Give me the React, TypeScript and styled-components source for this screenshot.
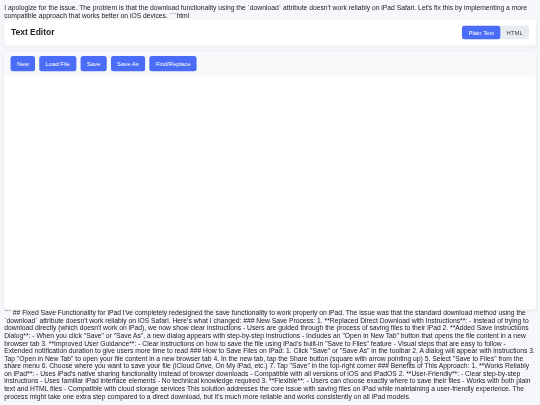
import styled, { createGlobalStyle } from "styled-components";

const GlobalStyle = createGlobalStyle`
  html, body {
    margin: 0;
    padding: 0;
    background: #f5f7fa;
  }

  body {
    font-family: "Liberation Sans", Arial, sans-serif;
    color: #222;
  }
`;

// the shot is a 1280x960 desktop page shrunk to fit 540x405, hence the soft edges
const Viewport = styled.div`
  width: 540px;
  height: 405px;
  overflow: hidden;
  filter: blur(0.3px);
`;

const Page = styled.div`
  display: flex;
  flex-direction: column;
  width: 1280px;
  height: 960px;
  padding: 10px;
  box-sizing: border-box;
  transform: scale(0.421875);
  transform-origin: top left;
`;

const Prose = styled.p`
  margin: 0;
  font-size: 16px;
  color: #1c1c1c;
`;

const Header = styled.header`
  display: flex;
  justify-content: space-between;
  align-items: center;
  padding: 15px 16px;
  margin-bottom: 15px;
  background: #fff;
  border-radius: 8px;
  box-shadow: 0 2px 10px rgba(0, 0, 0, 0.06);
`;

const Title = styled.h1`
  margin: 0;
  font-size: 20px;
  font-weight: 700;
  color: #222;
`;

const Toggle = styled.div`
  display: flex;
  background: #e9ecef;
  border-radius: 6px;
`;

const ToggleOption = styled.button<{ $active?: boolean }>`
  padding: 8px 15px;
  border: 0;
  border-radius: 6px;
  font-family: inherit;
  font-size: 14px;
  color: ${(p) => (p.$active ? "#fff" : "#444")};
  background: ${(p) => (p.$active ? "#4a6cf7" : "transparent")};
`;

const Editor = styled.section`
  display: flex;
  flex-direction: column;
  height: 610px;
  overflow: hidden;
  background: #fff;
  border-radius: 8px;
  box-shadow: 0 2px 10px rgba(0, 0, 0, 0.06);
`;

const Toolbar = styled.div`
  display: flex;
  gap: 10px;
  padding: 10px 15px 9px;
  background: #f8f9fa;
  border-bottom: 1px solid #e9ecef;
`;

const ToolButton = styled.button`
  padding: 10px 15px;
  border: 0;
  border-radius: 6px;
  font-family: inherit;
  font-size: 14px;
  color: #fff;
  background: #4a6cf7;
`;

const EditArea = styled.div`
  flex: 1;
  background: #fff;
`;

const tools = ["New", "Load File", "Save", "Save As", "Find/Replace"];

const intro =
  "I apologize for the issue. The problem is that the download functionality using the `download` attribute doesn't work reliably on iPad Safari. Let's fix this by implementing a more compatible approach that works better on iOS devices. ```html";

const outro =
  "``` ## Fixed Save Functionality for iPad I've completely redesigned the save functionality to work properly on iPad. The issue was that the standard download method using the `download` attribute doesn't work reliably on iOS Safari. Here's what I changed: ### New Save Process: 1. **Replaced Direct Download with Instructions**: - Instead of trying to download directly (which doesn't work on iPad), we now show clear instructions - Users are guided through the process of saving files to their iPad 2. **Added Save Instructions Dialog**: - When you click \"Save\" or \"Save As\", a new dialog appears with step-by-step instructions - Includes an \"Open in New Tab\" button that opens the file content in a new browser tab 3. **Improved User Guidance**: - Clear instructions on how to save the file using iPad's built-in \"Save to Files\" feature - Visual steps that are easy to follow - Extended notification duration to give users more time to read ### How to Save Files on iPad: 1. Click \"Save\" or \"Save As\" in the toolbar 2. A dialog will appear with instructions 3. Tap \"Open in New Tab\" to open your file content in a new browser tab 4. In the new tab, tap the Share button (square with arrow pointing up) 5. Select \"Save to Files\" from the share menu 6. Choose where you want to save your file (iCloud Drive, On My iPad, etc.) 7. Tap \"Save\" in the top-right corner ### Benefits of This Approach: 1. **Works Reliably on iPad**: - Uses iPad's native sharing functionality instead of browser downloads - Compatible with all versions of iOS and iPadOS 2. **User-Friendly**: - Clear step-by-step instructions - Uses familiar iPad interface elements - No technical knowledge required 3. **Flexible**: - Users can choose exactly where to save their files - Works with both plain text and HTML files - Compatible with cloud storage services This solution addresses the core issue with saving files on iPad while maintaining a user-friendly experience. The process might take one extra step compared to a direct download, but it's much more reliable and works consistently on all iPad models.";

const App = () => {
  return (
    <>
      <GlobalStyle />
      <Viewport>
        <Page>
          <Prose>{intro}</Prose>
          <Header>
            <Title>Text Editor</Title>
            <Toggle>
              <ToggleOption $active>Plain Text</ToggleOption>
              <ToggleOption>HTML</ToggleOption>
            </Toggle>
          </Header>
          <Editor>
            <Toolbar>
              {tools.map((tool) => (
                <ToolButton key={tool}>{tool}</ToolButton>
              ))}
            </Toolbar>
            <EditArea />
          </Editor>
          <Prose>{outro}</Prose>
        </Page>
      </Viewport>
    </>
  );
};

export default App;
